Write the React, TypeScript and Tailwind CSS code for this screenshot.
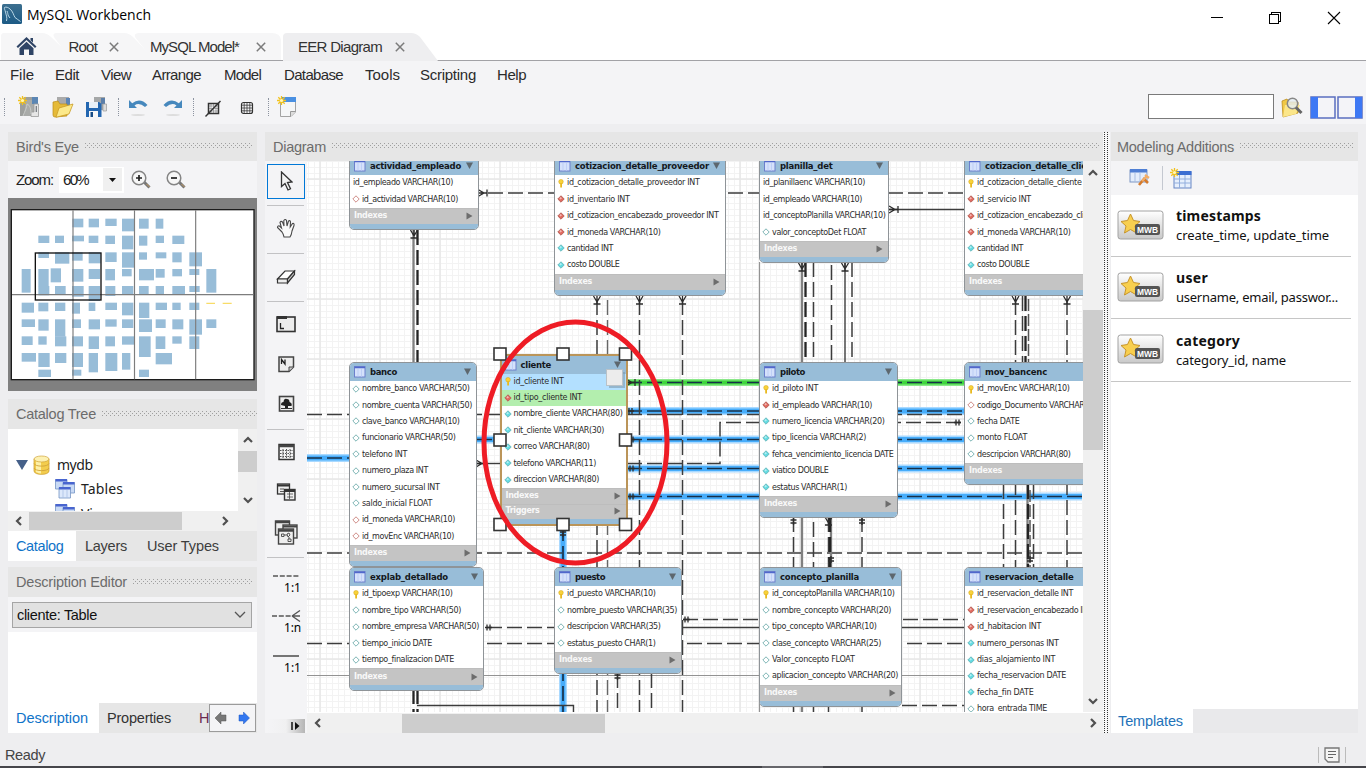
import React, { useLayoutEffect, useRef } from "react";

type FitProps = { w: number; className?: string; children: string };

/* A single line of text tracked so that it fills the given width. */
function Fit({ w, className = "", children }: FitProps) {
  const ref = useRef<HTMLSpanElement>(null);
  useLayoutEffect(() => {
    const el = ref.current;
    if (!el) return;
    el.style.letterSpacing = "0px";
    const natural = el.getBoundingClientRect().width;
    el.style.letterSpacing = `${(w - natural) / children.length}px`;
  }, [w, children]);
  return (
    <span ref={ref} className={`inline-block shrink-0 whitespace-pre ${className}`}>
      {children}
    </span>
  );
}

function Grip({ className = "" }: { className?: string }) {
  return (
    <svg className={`h-[7px] ${className}`} aria-hidden="true">
      <defs>
        <pattern id="grip" width="4" height="4" patternUnits="userSpaceOnUse">
          <rect x="0" y="0" width="1" height="1" fill="#9f9f9f" />
          <rect x="2" y="2" width="1" height="1" fill="#9f9f9f" />
        </pattern>
      </defs>
      <rect width="100%" height="6" fill="url(#grip)" shapeRendering="crispEdges" />
    </svg>
  );
}

function PanelHeader({ title, w, start = 8, end = 5, height = "h-[29px]" }: { title: string; w: number; start?: number; end?: number; height?: string }) {
  return (
    <div className={`flex shrink-0 items-center bg-[#e6e6e6] text-[14.500px] text-[#6c6c6c] ${height}`} style={{ paddingLeft: start, paddingRight: end }}>
      <Fit w={w}>{title}</Fit>
      <Grip className="ml-[6px] min-w-0 flex-1" />
    </div>
  );
}

/* ---------- Title bar, tabs, menu, toolbar ---------- */

function TitleBar() {
  return (
    <div className="flex h-[33px] shrink-0 items-start bg-white">
      <svg className="ml-[2px] mt-[4px]" width="20" height="20" viewBox="0 0 20 20">
        <defs>
          <linearGradient id="logo" x1="0" y1="0" x2="0" y2="1">
            <stop offset="0" stopColor="#3c6f8f" />
            <stop offset="1" stopColor="#1d5b86" />
          </linearGradient>
        </defs>
        <rect width="20" height="20" rx="1.5" fill="url(#logo)" />
        <path d="M4.500 17C5.500 13 4 11 3.500 8C3 6 2 4.500 2.500 3.500C4 2.500 6.500 3.500 8 5C11 7.500 11.500 11 13 13.500C14.500 15 17 16 18.500 17.500M5 7C6 9 5.500 10 6.500 12L8 14" fill="none" stroke="#b9d6e6" strokeWidth="1" />
      </svg>
      <Fit w={124} className="ml-[5px] mt-[5px] text-[14px] leading-[20px] text-black font-['Open_Sans',sans-serif]">MySQL Workbench</Fit>
      <svg className="ml-[1059px] mt-[10px]" width="132" height="16" viewBox="0 0 132 16" fill="none" stroke="#000" shapeRendering="crispEdges">
        <path d="M1 7.500H13" />
        <path d="M59.500 4.500H68.500V13.500H59.500zM61.500 4V2.500H70.500V11.500H69" />
        <path d="M118 2L130 14M130 2L118 14" shapeRendering="auto" strokeWidth="1.100" />
      </svg>
    </div>
  );
}

function TabX() {
  return (
    <svg width="10" height="10" viewBox="0 0 10 10">
      <path d="M.8 .8L9.200 9.200M9.200 .8L.8 9.200" stroke="#7b7b7b" strokeWidth="1.500" />
    </svg>
  );
}

function Tabs() {
  return (
    <div className="relative flex h-[28px] shrink-0 items-center bg-white text-[15px] text-[#333]">
      <svg className="absolute inset-0" width="1366" height="28">
        <path d="M1 27V3Q1 0 4 0H42Q47 0 51 4L75 27z" fill="#f6f6f7" />
        <path d="M71 27L54 4Q52 0 57 0H124Q129 0 133 4L155 27z" fill="#f6f6f7" />
        <path d="M153 27L135 4Q134 0 139 0H272Q280 0 281 7V27z" fill="#f6f6f7" />
        <path d="M0 27.500H283M437 27.500H1366" stroke="#a2a2a6" />
        <path d="M283 28V4Q283 0 287 0H411Q416 0 420 4L438 28z" fill="#eeeef0" />
      </svg>
      <div className="relative flex h-full items-center">
        <svg className="ml-[16px] mb-[3px]" width="21" height="20" viewBox="0 0 21 20" fill="#2f4465">
          <path d="M10.500 1L20.500 10.500L19 12L10.500 4L2 12L.5 10.500z" />
          <path d="M10.500 5.800L17.500 12.300V19H13V13.500H8V19H3.500V12.300z" />
          <path d="M14.500 2H17V6.500L14.500 4.200z" />
        </svg>
        <Fit w={28.500} className="ml-[31.500px]">Root</Fit>
        <span className="ml-[12px]"><TabX /></span>
        <Fit w={89} className="ml-[31px]">MySQL Model*</Fit>
        <span className="ml-[17px]"><TabX /></span>
        <Fit w={84} className="ml-[32px]">EER Diagram</Fit>
        <span className="ml-[13px]"><TabX /></span>
      </div>
    </div>
  );
}

const menu: [string, number, number][] = [
  ["File", 10, 24], ["Edit", 21, 24], ["View", 22, 30], ["Arrange", 21, 49], ["Model", 23, 37],
  ["Database", 23, 59], ["Tools", 22, 35], ["Scripting", 20, 56], ["Help", 21, 29],
];

function MenuBar() {
  return (
    <div className="flex h-[29px] shrink-0 items-center bg-[#f4f4f6] pb-[2px] text-[15px] text-[#2b2b2b]">
      {menu.map(([label, gap, w]) => (
        <span key={label} className="flex" style={{ marginLeft: gap }}><Fit w={w}>{label}</Fit></span>
      ))}
    </div>
  );
}

const Sep = ({ className = "" }: { className?: string }) => (
  <div className={`h-[18px] w-[2px] shrink-0 border-l border-dotted border-[#8c93a0] ${className}`} />
);

const Spark = () => (
  <g stroke="#f2c21c" strokeWidth="1.300">
    <path d="M4.500 0V9M0 4.500H9M1.300 1.300L7.700 7.700M7.700 1.300L1.300 7.700" />
    <circle cx="4.500" cy="4.500" r="1.600" fill="#fff6b8" stroke="none" />
  </g>
);

function Toolbar() {
  return (
    <div className="flex h-[34px] shrink-0 items-center bg-[#f4f4f6]">
      <Sep className="ml-[4px]" />
      <svg className="ml-[12px]" width="22" height="22" viewBox="0 0 22 22">
        <path d="M6 1H16V20H2V7z" fill="#9d9f9d" />
        <path d="M8 4H15L19 9V20H6z" fill="#a9aba9" />
        <path d="M14 1H20V8H14z" fill="#5b86b4" />
        <path d="M16 8H20.500V20.500H13V16H16z" fill="#e6e6e6" stroke="#9b9b9b" strokeWidth=".8" />
        <path d="M5 20C7 15 9 11 9 8C12 9 13 13 13 18" stroke="#c9cbc9" fill="none" />
        <path d="M18.300 10V16" stroke="#70757c" strokeWidth="1.200" />
        <Spark />
      </svg>
      <svg className="ml-[12px]" width="22" height="22" viewBox="0 0 22 22">
        <path d="M5 1H17V14H5z" fill="#aaa" /><path d="M14 2H18V10H14z" fill="#5c85b7" />
        <path d="M1 6L6 5L8 8H15V20L3 21Q1 21 1 19z" fill="#e5ba39" stroke="#bb8c19" strokeWidth=".7" />
        <path d="M7 12L21 8L17 18L4 21.300z" fill="#fce98a" stroke="#c99c25" strokeWidth=".8" />
      </svg>
      <svg className="ml-[11px]" width="23" height="22" viewBox="0 0 23 22">
        <path d="M9 1H20V14H9z" fill="#a5a7a8" /><path d="M16 2H20V8H16z" fill="#5c7fa9" /><path d="M18 8H21.500V15H18z" fill="#ddd" stroke="#999" strokeWidth=".7" />
        <path d="M1 6H14L16.500 8V21H1z" fill="#2366b0" /><path d="M4 6H13V12H4z" fill="#e8f0f7" />
        <path d="M4 15H13V21H4z" fill="#f8f8f8" /><path d="M5.500 16H8V21H5.500z" fill="#174c86" />
      </svg>
      <Sep className="ml-[10px]" />
      <svg className="ml-[9px]" width="19" height="20" viewBox="0 0 19 20">
        <path d="M0 3V11H8L5.500 8.500Q10 5 16 10L18.500 8Q11 0 3.200 6.300z" fill="#4688bd" />
        <ellipse cx="9" cy="18" rx="7" ry=".9" fill="#ddd" />
      </svg>
      <svg className="ml-[15px]" width="19" height="20" viewBox="0 0 19 20">
        <path d="M19 3V11H11L13.500 8.500Q9 5 3 10L.5 8Q8 0 15.800 6.300z" fill="#4688bd" />
        <ellipse cx="10" cy="18" rx="7" ry=".9" fill="#ddd" />
      </svg>
      <Sep className="ml-[11px]" />
      <svg className="ml-[10px] mt-[2px]" width="17" height="17" viewBox="0 0 17 17" fill="none" stroke="#333">
        <path d="M3.500 3.500H13.500V13.500H3.500z" strokeWidth="1.500" />
        <path d="M6 4V13M8.500 4V13M11 4V13M4 6H13M4 8.500H13M4 11H13" strokeWidth=".35" />
        <path d="M.5 16.500L15.500 1" strokeWidth="1.400" />
      </svg>
      <svg className="ml-[18px] mt-[2px]" width="14" height="14" viewBox="0 0 14 14" fill="none" stroke="#333">
        <rect x="1.500" y="1.500" width="11" height="11" rx="2" strokeWidth="1.200" />
        <path d="M4.200 1V13M7 1V13M9.800 1V13M1 4.200H13M1 7H13M1 9.800H13" strokeWidth=".75" />
      </svg>
      <Sep className="ml-[14px]" />
      <svg className="ml-[7px]" width="20" height="22" viewBox="0 0 20 22">
        <path d="M3.500 3V20.500H14L18.500 16V3z" fill="#f5f6f7" stroke="#a3a3a3" />
        <path d="M5 1H19V6H5z" fill="#4a90e2" /><path d="M13.500 20.500V15.500H18.500" fill="#ddd" stroke="#999" />
        <Spark />
      </svg>
      <div className="ml-auto mb-[2px] h-[25px] w-[126px] border border-[#7a7a7a] bg-white" />
      <svg className="ml-[7px]" width="22" height="21" viewBox="0 0 22 21">
        <path d="M1 4L6 2L8 5H17V16L2 20z" fill="#f0c846" stroke="#bd8e1f" strokeWidth=".8" />
        <path d="M4 8H19L15 17L2 20z" fill="#fbe68a" />
        <circle cx="11.500" cy="6.500" r="5.200" fill="#e5edf2cc" stroke="#888" strokeWidth="1.500" />
        <path d="M15 10.500L20.500 16" stroke="#656565" strokeWidth="3" />
      </svg>
      <svg className="ml-[7px] mr-[3px]" width="53" height="23" viewBox="0 0 53 23">
        <rect x="1" y="1" width="24" height="21" fill="#f4f4f8" stroke="#5a6ec0" strokeWidth="1.500" />
        <rect x="1" y="1" width="7" height="21" fill="#3e78f4" />
        <rect x="28" y="1" width="24" height="21" fill="#f4f4f8" stroke="#5a6ec0" strokeWidth="1.500" />
        <rect x="45" y="1" width="7" height="21" fill="#3e78f4" />
      </svg>
    </div>
  );
}

/* ---------- Left column ---------- */

/* x, y, width, height of every table on the overview map (thirds of a pixel) */
const mapBlocks: number[][] = [
  [217, 266, 33, 26], [266, 266, 31, 26], [316, 266, 34, 22], [366, 266, 38, 38], [417, 266, 29, 30], [467, 266, 23, 30],
  [115, 317, 33, 22], [165, 317, 27, 22], [216, 317, 36, 17], [266, 317, 29, 22], [316, 317, 29, 25], [366, 317, 34, 41], [417, 317, 25, 30], [467, 317, 25, 22], [517, 317, 36, 25],
  [115, 367, 32, 17], [165, 367, 43, 34], [216, 367, 32, 25], [266, 367, 36, 33], [316, 367, 34, 29], [366, 367, 36, 46], [417, 367, 24, 22], [467, 367, 32, 18], [517, 367, 28, 30], [568, 367, 38, 42],
  [65, 417, 27, 71], [115, 417, 31, 52], [152, 415, 31, 42], [216, 417, 34, 38], [266, 417, 34, 30], [316, 417, 29, 34], [366, 417, 29, 22], [417, 417, 45, 34], [467, 417, 27, 26], [517, 417, 29, 22], [568, 417, 30, 18], [619, 417, 30, 71],
  [115, 468, 33, 28], [165, 468, 32, 26], [216, 468, 35, 32], [266, 468, 34, 45], [316, 468, 30, 30], [366, 468, 34, 26], [417, 468, 29, 26], [467, 468, 25, 26], [517, 468, 38, 26], [568, 468, 31, 18],
  [65, 518, 37, 30], [115, 518, 30, 26], [165, 518, 31, 25], [216, 518, 24, 33], [266, 518, 20, 25], [316, 518, 35, 22], [366, 518, 34, 38], [417, 518, 31, 46], [467, 518, 34, 22], [517, 518, 25, 22], [568, 518, 30, 22],
  [65, 568, 40, 23], [115, 568, 31, 34], [165, 568, 31, 52], [216, 568, 27, 26], [266, 568, 34, 30], [316, 568, 34, 22], [366, 568, 34, 26], [417, 568, 39, 38], [467, 568, 30, 26], [517, 568, 33, 30], [568, 568, 38, 46], [619, 568, 30, 26],
  [65, 619, 33, 26], [115, 619, 25, 25], [165, 619, 34, 30], [216, 619, 33, 30], [266, 619, 31, 38], [316, 619, 29, 30], [366, 619, 36, 25], [417, 619, 35, 62], [467, 619, 29, 38], [517, 619, 28, 22], [568, 619, 30, 38],
  [65, 669, 43, 26], [115, 669, 34, 42], [165, 669, 34, 30], [216, 669, 33, 42], [266, 669, 28, 58], [316, 669, 36, 54], [366, 669, 25, 50], [467, 669, 49, 34],
  [115, 719, 38, 22], [216, 719, 28, 18], [417, 719, 30, 22],
];

function BirdsEye() {
  return (
    <div className="flex h-[259px] shrink-0 flex-col">
      <PanelHeader title="Bird's Eye" w={63} />
      <div className="flex h-[37px] items-center bg-[#f4f4f6] pl-[8px] text-[15px] text-[#222]">
        <Fit w={37}>Zoom:</Fit>
        <div className="ml-[6px] flex h-[26px] w-[65px] items-center bg-white pl-[4px]">
          <Fit w={25}>60%</Fit>
          <div className="ml-auto mr-[2px] flex h-[23px] w-[19px] items-center justify-center bg-[#f0f0f0]">
            <svg width="7" height="4"><path d="M0 0H7L3.500 4z" fill="#111" /></svg>
          </div>
        </div>
        {["+", "-"].map((s, i) => (
          <svg key={s} className={i ? "ml-[15px]" : "ml-[7px]"} width="20" height="19" viewBox="0 0 20 19" fill="none">
            <path d="M13 12L18.500 17.500" stroke="#777" strokeWidth="3" />
            <path d="M15.500 14L18.500 17" stroke="#c79c62" strokeWidth="1" />
            <circle cx="8" cy="8" r="6.800" fill="#f7f7f7" stroke="#858585" strokeWidth="1.500" />
            <path d={i ? "M5 8H11" : "M5 8H11M8 5V11"} stroke="#222" strokeWidth="1.700" />
          </svg>
        ))}
      </div>
      <svg width="249" height="193" viewBox="24 204 747 579">
        <rect x="24" y="204" width="747" height="579" fill="#808080" />
        <rect x="34" y="239" width="728" height="510" fill="#fff" stroke="#1c1c1c" strokeWidth="4" />
        {mapBlocks.map(([x, y, w, h], i) => <rect key={i} x={x} y={y} width={w} height={h} fill="#98bdd8" />)}
        <path d="M219 241V748M403.500 241V748M587 241V748M36 494H760" stroke="#7d7d7d" strokeWidth="3.500" />
        <path d="M619 520H645M668 520H695" stroke="#f8dc68" strokeWidth="4" />
        <rect x="106" y="369" width="197" height="141" fill="none" stroke="#111" strokeWidth="4" />
      </svg>
    </div>
  );
}

const Chevron = ({ d }: { d: string }) => (
  <svg width="10" height="10" viewBox="0 0 10 10"><path d={d} fill="none" stroke="#505050" strokeWidth="2.200" /></svg>
);
const UP = "M1 7L5 3L9 7", DOWN = "M1 3L5 7L9 3", LEFT = "M7 1L3 5L7 9", RIGHT = "M3 1L7 5L3 9";

const TablesIcon = () => (
  <svg width="20" height="20" viewBox="0 0 20 20">
    <g stroke="#7594c4" strokeWidth=".8">
      <path d="M.5 .5H12V10H.5z" fill="#c9daf5" /><path d="M8 3.500H19.500V14H8z" fill="#c9daf5" /><path d="M4 8.500H15.500V19H4z" fill="#dce8fb" />
    </g>
    <path d="M.5 0H12V2.500H.5zM8 3H19.500V5.500H8zM4 8H15.500V10.500H4z" fill="#4965cf" />
    <path d="M8 11V19M12 11V19" stroke="#a9c0e6" strokeWidth=".8" />
  </svg>
);

function CatalogTree() {
  return (
    <div className="mt-[8px] flex h-[162px] shrink-0 flex-col">
      <PanelHeader title="Catalog Tree" w={80} end={0} height="h-[30px]" />
      <div className="flex h-[82px]">
        <div className="w-[230px] overflow-hidden bg-white pt-[24px] text-[14px] text-[#222] font-['Noto_Sans',sans-serif]">
          <div className="flex h-[24px] items-center">
            <svg className="ml-[8px]" width="12" height="10"><path d="M0 0H12L6 10z" fill="#456089" /></svg>
            <svg className="ml-[5px]" width="18" height="20" viewBox="0 0 18 20">
              <path d="M1 4V16C1 20.500 16 20.500 16 16V4z" fill="#f3cd4e" stroke="#c9992b" strokeWidth=".7" />
              <path d="M3 6V17Q6 18.500 8 18.500V7z" fill="#fdf0a8" />
              <ellipse cx="8.500" cy="4" rx="7.500" ry="3" fill="#fdf1b2" stroke="#d0a33b" strokeWidth=".7" />
              <path d="M1 8.500C2 12 15 12 16 8.500M1 13C2 16.500 15 16.500 16 13" fill="none" stroke="#d0a33b" strokeWidth=".9" />
            </svg>
            <Fit w={35.500} className="ml-[6px]">mydb</Fit>
          </div>
          <div className="flex h-[24px] items-center pl-[47px]"><TablesIcon /><Fit w={42} className="ml-[6px]">Tables</Fit></div>
          <div className="flex h-[26px] items-center pl-[47px]"><TablesIcon /><Fit w={37} className="ml-[6px]">Views</Fit></div>
        </div>
        <div className="flex w-[19px] flex-col items-center bg-[#f0f0f0]">
          <span className="flex h-[22px] items-center"><Chevron d={UP} /></span>
          <div className="h-[21px] w-full bg-[#cdcdcd]" />
          <span className="mt-auto flex h-[22px] items-center"><Chevron d={DOWN} /></span>
        </div>
      </div>
      <div className="flex h-[20px] items-center bg-[#f0f0f0]">
        <span className="flex w-[21px] justify-center"><Chevron d={LEFT} /></span>
        <div className="h-[18px] w-[153px] bg-[#cdcdcd]" />
        <span className="ml-[38px]"><Chevron d={RIGHT} /></span>
      </div>
      <div className="flex h-[30px] bg-[#e6e6e6] text-[14.500px] text-[#3d3d3d]">
        <div className="flex h-full w-[68px] items-center bg-white pl-[8px] text-[#0f73c8]"><Fit w={47.500}>Catalog</Fit></div>
        <div className="flex items-center pl-[9px]"><Fit w={42}>Layers</Fit><Fit w={72} className="ml-[20px]">User Types</Fit></div>
      </div>
    </div>
  );
}

function DescriptionEditor() {
  return (
    <div className="mt-[6px] flex h-[166px] shrink-0 flex-col">
      <PanelHeader title="Description Editor" w={111} height="h-[30px]" />
      <div className="flex h-[35px] items-center justify-center bg-[#f4f4f6]">
        <div className="mr-[1px] flex h-[26px] w-[240px] items-center border border-[#a5a5a5] bg-[#e1e1e1] pl-[4px] pr-[5px] text-[14.500px] text-[#111]">
          <Fit w={80}>cliente: Table</Fit>
          <svg className="ml-auto" width="12" height="7"><path d="M1 1L6 6L11 1" fill="none" stroke="#555" strokeWidth="1.300" /></svg>
        </div>
      </div>
      <div className="h-[71px] bg-white" />
      <div className="flex h-[30px] bg-[#e6e6e6] text-[14.500px] text-[#333]">
        <div className="flex h-full w-[91px] shrink-0 items-center bg-white pl-[8px] text-[#0f73c8]"><Fit w={72}>Description</Fit></div>
        <div className="flex w-[110px] shrink-0 items-center overflow-hidden pl-[8px]"><Fit w={64}>Properties</Fit><Fit w={10} className="ml-[28px] text-[#6b2a50]">H</Fit></div>
        <div className="mt-[1px] flex h-[28px] w-[47px] items-center justify-around border border-[#9b9b9b] bg-[#f4f4f6]">
          <svg width="12" height="14"><path d="M0 7L6 1V4H11V10H6V13z" fill="#777" stroke="#555" strokeWidth=".5" /></svg>
          <svg width="12" height="14"><path d="M11.500 7L5.500 1V4H1V10H5.500V13z" fill="#3277f0" stroke="#1b55c0" strokeWidth=".5" /></svg>
        </div>
      </div>
    </div>
  );
}

/* ---------- Tool strip ---------- */

const toolIcons: Record<string, React.ReactNode> = {
  hand: <path d="M6 14L1.500 9.500Q1.500 7.500 3.500 8L5.500 10L4 4.500Q4.800 2.500 6.500 4L8 8L7.800 2.500Q9.300 .5 10.500 2.500L11 8L12.500 3Q14.200 2 14.500 4L14.200 9L16.500 5.500Q18.500 5 18 7.500L16 13Q15.500 17 14 19H8Q7.500 16 6 14z" fill="#fafafa" stroke="#484848" strokeWidth="1.100" />,
  eraser: <g transform="translate(0 1)"><path d="M1.500 12L9 4H18.500L11.500 12z" fill="#fff" stroke="#333" strokeWidth="1.200" /><path d="M1.500 12H11.500V16H1.500z" fill="#eee" stroke="#333" strokeWidth="1.200" /><path d="M11.500 12L18.500 4V7.500L11.500 16z" fill="#ccc" stroke="#333" strokeWidth="1.200" /></g>,
  layer: <g><rect x="1" y="3" width="18" height="14.500" fill="#ececec" stroke="#333" strokeWidth="1.600" /><path d="M1 2H11V5H1z" fill="#333" /><path d="M4.500 9V14.500H8" stroke="#222" strokeWidth="1.300" fill="none" /></g>,
  note: <g><path d="M3 3H17.500V13L13 17.500H3z" fill="#eee" stroke="#444" strokeWidth="1.500" /><path d="M13 17V13H17.500" fill="#ccc" stroke="#444" /><path d="M5.500 10V5.500L9 10V5.500" fill="none" stroke="#222" strokeWidth="1.300" /></g>,
  image: <g><rect x="3.500" y="2.500" width="14" height="14.500" fill="#eee" stroke="#444" strokeWidth="1.600" /><path d="M5 11Q5 8 7.500 8Q8 4 11 5Q13.500 5 13.500 8Q16.500 9 15.500 12L12 12V15H9V12z" fill="#222" /><path d="M5 14.500H16" stroke="#333" /></g>,
  table: <g><rect x="3" y="2.500" width="15" height="15" fill="#f5f5f5" stroke="#333" strokeWidth="1.500" /><path d="M3 4H18" stroke="#444" strokeWidth="2.500" /><path d="M7 7V17M10.500 7V17M14 7V17M4 8.500H17M4 11.500H17M4 14.500H17" stroke="#555" strokeDasharray="1.500 1" /></g>,
  view: <g stroke="#333" fill="#eee"><rect x="1.500" y="2" width="12" height="10" strokeWidth="1.300" /><path d="M1.500 3.500H13.500" strokeWidth="2" /><path d="M4 7H8M4 9.500H8" strokeWidth=".8" /><rect x="8.500" y="7.500" width="10.500" height="10.500" strokeWidth="1.400" /><path d="M8.500 9H19" strokeWidth="2" /><path d="M11 12H17M11 15H17M13.500 10V17" strokeWidth=".7" /></g>,
  routine: <g stroke="#444" fill="#eee" strokeWidth="1.400"><rect x="-.5" y="-1" width="14" height="14" /><path d="M-.5 0H13.500" strokeWidth="2.500" /><rect x="7" y="3" width="14" height="13" /><path d="M7 4.500H21" strokeWidth="2" /><rect x="2.500" y="7" width="15" height="15" /><path d="M2.500 8.500H17.500" strokeWidth="2.500" /><path d="M5.500 12H8V14.500H5.500zM12 17H15V19.500H12zM11 12L13 11L14 13L12 15zM8 13H11M13 15V17" strokeWidth=".9" /></g>,
};

const ToolItem = ({ name }: { name: string }) => (
  <div className="flex h-[40px] shrink-0 items-center justify-center pr-[2px]"><svg className="overflow-visible" width="20" height="20" viewBox="0 0 20 20">{toolIcons[name]}</svg></div>
);
const ToolSep = () => <div className="flex h-[8px] shrink-0 items-center pt-[3px]"><div className="h-px w-[37px] bg-[#c2c2c4]" /></div>;

function Relation({ label, kind }: { label: string; kind: number }) {
  return (
    <div className="flex h-[40px] shrink-0 flex-col items-end pr-[6px] pt-[10px]">
      <svg width="29" height="12" viewBox="0 0 29 12" fill="none" stroke="#555" strokeWidth="1.600">
        <path d={kind === 1 ? "M0 6H20" : "M1 6H27"} strokeDasharray={kind === 2 ? undefined : "5 1.800"} />
        {kind === 1 && <path d="M20 6L28 .5M20 6L28 11.500M20 6H28" strokeWidth="1.300" />}
      </svg>
      <Fit w={17} className="text-[12px] leading-[11px] text-black font-['Noto_Sans',sans-serif]">{label}</Fit>
    </div>
  );
}

function ToolStrip() {
  return (
    <div className="flex h-full w-[42px] shrink-0 flex-col bg-[#f4f4f6] pl-[2px] pt-[3px]">
      <div className="flex h-[35px] w-[38px] shrink-0 items-center justify-center border border-[#0078d7]">
        <svg width="13" height="21" viewBox="0 0 13 21"><path d="M1.500 1V15.500L5 12.500L8 19L10.500 17.800L7.500 11.500L12 11z" fill="#f4f4f4" stroke="#333" strokeWidth="1.300" /></svg>
      </div>
      <div className="h-px shrink-0" />
      <ToolSep />
      <ToolItem name="hand" /><ToolSep />
      <ToolItem name="eraser" /><ToolSep />
      <ToolItem name="layer" /><ToolItem name="note" /><ToolItem name="image" /><ToolSep />
      <ToolItem name="table" /><ToolItem name="view" /><ToolItem name="routine" /><ToolSep />
      <Relation label="1:1" kind={0} /><Relation label="1:n" kind={1} /><Relation label="1:1" kind={2} />
      <div className="mt-auto flex h-[14px] w-[38px] items-center justify-end bg-gradient-to-r from-[#f4f4f6] via-[#f0f0f1] to-[#b5b5b5] pr-[5px]">
        <svg width="9" height="8"><path d="M1 0V8" stroke="#111" strokeWidth="1.500" /><path d="M4 0L8.500 4L4 8z" fill="#111" /></svg>
      </div>
    </div>
  );
}

/* ---------- Diagram ---------- */

type Row = [icon: "k" | "r" | "R" | "c" | "C" | "", text: string, width: number];
type Entity = { name: string; nw: number; x: number; y: number; w: number; rows: Row[]; selected?: boolean };

const entities: Entity[] = [
  { name: "actividad_empleado", nw: 91, x: 349, y: 156.2, w: 130, rows: [["", "id_empleado VARCHAR(10)", 100], ["R", "id_actividad VARCHAR(10)", 96]] },
  { name: "cotizacion_detalle_proveedor", nw: 134, x: 554, y: 156.2, w: 172, rows: [["k", "id_cotizacion_detalle_proveedor INT", 132.5], ["r", "id_inventario INT", 62.5], ["r", "id_cotizacion_encabezado_proveedor INT", 151.5], ["r", "id_moneda VARCHAR(10)", 93.5], ["c", "cantidad INT", 46], ["c", "costo DOUBLE", 52.5]] },
  { name: "planilla_det", nw: 52.5, x: 759, y: 156.2, w: 130, rows: [["", "id_planillaenc VARCHAR(10)", 102], ["", "id_empleado VARCHAR(10)", 99], ["", "id_conceptoPlanilla VARCHAR(10)", 122.5], ["C", "valor_conceptoDet FLOAT", 94]] },
  { name: "cotizacion_detalle_cliente", nw: 117, x: 964, y: 156.2, w: 160, rows: [["k", "id_cotizacion_detalle_cliente INT", 119], ["r", "id_servicio INT", 54], ["r", "id_cotizacion_encabezado_cliente INT", 138], ["r", "id_moneda VARCHAR(10)", 93.5], ["c", "cantidad INT", 46], ["c", "costo DOUBLE", 52.5]] },
  { name: "banco", nw: 27, x: 349, y: 362, w: 128, rows: [["C", "nombre_banco VARCHAR(50)", 107.5], ["C", "nombre_cuenta VARCHAR(50)", 110], ["C", "clave_banco VARCHAR(10)", 97.5], ["C", "funcionario VARCHAR(50)", 93.5], ["C", "telefono INT", 45], ["C", "numero_plaza INT", 66], ["C", "numero_sucursal INT", 77.5], ["C", "saldo_inicial FLOAT", 70], ["R", "id_moneda VARCHAR(10)", 93], ["R", "id_movEnc VARCHAR(10)", 92]] },
  { name: "cliente", nw: 30.5, x: 499.5, y: 353.5, w: 128, selected: true, rows: [["k", "id_cliente INT", 50], ["r", "id_tipo_cliente INT", 68.5], ["c", "nombre_cliente VARCHAR(80)", 109], ["c", "nit_cliente VARCHAR(30)", 90.5], ["c", "correo VARCHAR(80)", 76], ["c", "telefono VARCHAR(11)", 82.5], ["c", "direccion VARCHAR(80)", 85.5]] },
  { name: "piloto", nw: 25, x: 759, y: 362, w: 139, rows: [["k", "id_piloto INT", 46], ["r", "id_empleado VARCHAR(10)", 100], ["c", "numero_licencia VARCHAR(20)", 112.5], ["c", "tipo_licencia VARCHAR(2)", 94], ["c", "fehca_vencimiento_licencia DATE", 121.5], ["c", "viatico DOUBLE", 56.5], ["c", "estatus VARCHAR(1)", 75]] },
  { name: "mov_bancenc", nw: 62, x: 964, y: 362, w: 160, rows: [["k", "id_movEnc VARCHAR(10)", 92.5], ["R", "codigo_Documento VARCHAR(10)", 122], ["C", "fecha DATE", 42.5], ["C", "monto FLOAT", 50], ["C", "descripcion VARCHAR(80)", 93.5]] },
  { name: "explab_detallado", nw: 78, x: 349, y: 567.3, w: 134.5, rows: [["k", "id_tipoexp VARCHAR(10)", 90.5], ["C", "nombre_tipo VARCHAR(50)", 99], ["C", "nombre_empresa VARCHAR(50)", 117], ["C", "tiempo_inicio DATE", 70], ["C", "tiempo_finalizacion DATE", 92]] },
  { name: "puesto", nw: 30, x: 554, y: 567.3, w: 128, rows: [["k", "id_puesto VARCHAR(10)", 88.5], ["C", "nombre_puesto VARCHAR(35)", 110], ["C", "descripcion VARCHAR(35)", 93.5], ["C", "estatus_puesto CHAR(1)", 88.5]] },
  { name: "concepto_planilla", nw: 79, x: 759, y: 567.3, w: 143, rows: [["k", "id_conceptoPlanilla VARCHAR(10)", 122.5], ["C", "nombre_concepto VARCHAR(20)", 119], ["C", "tipo_concepto VARCHAR(10)", 104.5], ["C", "clase_concepto VARCHAR(25)", 109], ["C", "Valor_concepto FLOAT", 82.5], ["C", "aplicacion_concepto VARCHAR(20)", 126]] },
  { name: "reservacion_detalle", nw: 88.5, x: 964, y: 567.3, w: 160, rows: [["k", "id_reservacion_detalle INT", 96], ["r", "id_reservacion_encabezado INT", 115.5], ["r", "id_habitacion INT", 64], ["c", "numero_personas INT", 81.5], ["c", "dias_alojamiento INT", 78], ["c", "fecha_reservacion DATE", 89], ["c", "fecha_fin DATE", 56.5], ["C", "hora_entrada TIME", 70]] },
];

function RowIcon({ kind }: { kind: string }) {
  if (kind === "k")
    return <svg width="8" height="9" viewBox="0 0 8 9"><circle cx="4" cy="2.700" r="2.300" fill="#f8d23a" stroke="#d7a61a" strokeWidth=".5" /><path d="M3.200 4H5V8.500H3.200z" fill="#e9b920" /></svg>;
  const red = kind === "r" || kind === "R";
  const solid = kind === "r" || kind === "c";
  const stroke = red ? (solid ? "#b8645c" : "#cf8d88") : solid ? "#6fbcc0" : "#7db5b5";
  const fill = solid ? (red ? "#e2695f" : "#62dbe2") : "#fff";
  return (
    <svg className="mb-[1px]" width="8" height="8" viewBox="0 0 8 8">
      <path d="M4 .8L7.200 4L4 7.200L.8 4z" fill={fill} stroke={stroke} strokeWidth="1" strokeLinejoin="round" />
      {solid && <path d="M3.600 2L5 3.300L3.600 4.600L2.300 3.300z" fill="#ffffff88" />}
    </svg>
  );
}

function Bar({ label, w, short }: { label: string; w: number; short?: boolean }) {
  return (
    <div className={`flex shrink-0 items-center border-t border-[#bdbdbd] bg-[#c4c4c4] pb-[1px] pl-[4px] pr-[5px] ${short ? "h-[15.500px]" : "h-[16.500px]"}`}>
      <Fit w={w} className="text-[8px] font-bold leading-[10px] text-[#f8f8f8]">{label}</Fit>
      <svg className="ml-auto" width="7" height="8"><path d="M.5 .5L6.500 4L.5 7.500z" fill="#6d6d6d" /></svg>
    </div>
  );
}

function EntityBox({ e }: { e: Entity }) {
  return (
    <div
      className={`absolute flex flex-col overflow-hidden bg-white ${e.selected ? "border-2 border-[#bb9559]" : "rounded-[5px] border border-[#8f9498]"}`}
      style={{ left: e.x - 307, top: e.y - 161, width: e.w }}
    >
      <div className={`flex shrink-0 items-center bg-[#98bdd8] pr-[5px] ${e.selected ? "h-[18px] pl-[3px]" : "h-[18px] pl-[4px]"}`}>
        <svg width="12" height="12" viewBox="0 0 12 12">
          <rect x=".5" y=".5" width="10.500" height="10.500" fill="#d5e1fb" stroke="#6c80cc" />
          <path d="M.5 1.500H11" stroke="#5068cc" strokeWidth="1.600" /><path d="M4 3V11M7.500 3V11" stroke="#b6c7f3" strokeWidth=".7" />
        </svg>
        <Fit w={e.nw} className="ml-[4px] text-[8.500px] font-bold leading-[12px] text-[#14181c]">{e.name}</Fit>
        <svg className="ml-auto" width="7" height="8"><path d="M0 .5H7L3.500 7z" fill="#5d676e" /></svg>
      </div>
      {e.rows.map(([icon, text, w], i) => (
        <div
          key={i}
          className={`flex h-[16.400px] shrink-0 items-center ${e.selected && i === 0 ? "bg-[#b3e0ff]" : e.selected && i === 1 ? "bg-[#b3eeae]" : ""}`}
        >
          {icon ? <span className="ml-[2px] mr-[2px] w-[8px] shrink-0"><RowIcon kind={icon} /></span> : <span className="w-[3px]" />}
          <Fit w={w} className="text-[8px] leading-[12px] text-[#2c2c2c]">{text}</Fit>
        </div>
      ))}
      <Bar label="Indexes" w={33} short={e.selected} />
      {e.selected && <Bar label="Triggers" w={34} short />}
      <div className="h-[5px] shrink-0 bg-[#98bdd8]" />
    </div>
  );
}

const dashed: string[] = [
  "M488 193H964", "M307 414.500H964", "M307 553H1082", "M487 627.500H554", "M307 643.500H964", "M683 619.500H964", "M902 705.500H964",
  "M627 463.500H720V422.500H964",
  "M597 300V712", "M639.500 300V712", "M682.500 300V712", "M617.500 673V712", "M651.500 673V712",
  "M813.500 262V712", "M831.500 265V362", "M852 262V362", "M793.500 517V712", "M828.500 517V712", "M862 517V712",
  "M1015.500 300V567", "M1022.500 296V362", "M1067 300V567", "M1003.500 484V567", "M1033.500 484V567",
];
const solid: string[] = [
  "M889 209.500H964", "M682 627.500H964", "M477 463.500H500", "M845 262V362", "M417 705.500H573.500V712",
];
const blue: string[] = ["M627 411H964", "M477 439.500H500", "M627 439.500H964", "M307 458H349", "M627 468.500H964", "M627 496.500H1082", "M563 526V712"];

const crowDown = (x: number, y: number) => `M${x - 3.5} ${y}L${x} ${y + 6}L${x + 3.5} ${y}M${x} ${y}V${y + 8}M${x - 3.5} ${y + 8}H${x + 3.5}`;
const crowRight = (x: number, y: number) => `M${x} ${y - 3.5}L${x + 6} ${y}L${x} ${y + 3.5}M${x} ${y}H${x + 9}M${x + 9} ${y - 3.5}V${y + 3.5}`;
const barsH = (x: number, y: number) => `M${x} ${y - 3}V${y + 3}M${x + 3} ${y - 3}V${y + 3}M${x - 2} ${y}H${x + 5}`;
const barsV = (x: number, y: number) => `M${x - 3} ${y}H${x + 3}M${x - 3} ${y + 3}H${x + 3}M${x} ${y - 2}V${y + 5}`;

function Links() {
  return (
    <svg className="absolute inset-0" width="776" height="551" viewBox="307 161 776 551" fill="none">
      <defs>
        <pattern id="minor" x="320" y="179" width="6" height="6" patternUnits="userSpaceOnUse">
          <path d="M.5 0V6M0 .5H6" stroke="#f3f3f3" />
        </pattern>
        <pattern id="major" x="319" y="178" width="60" height="60" patternUnits="userSpaceOnUse">
          <path d="M1 0V60M0 1H60" stroke="#e8e8e8" strokeWidth="1.500" />
        </pattern>
      </defs>
      <rect x="307" y="161" width="776" height="551" fill="url(#minor)" />
      <rect x="307" y="161" width="776" height="551" fill="url(#major)" />
      <path d="M307 675.500H964M759.500 262V712" stroke="#939393" strokeWidth="1.200" />
      <path d="M607.500 300V712" stroke="#666" strokeWidth="1.400" strokeDasharray="15 5" />
      <path d="M627 382.500H964" stroke="#8be88a" strokeWidth="7" /><path d="M627 382.500H964" stroke="#3fd63d" strokeWidth="4" />
      {blue.map((d) => <path key={d} d={d} stroke="#a9d9ff" strokeWidth="8" />)}
      {blue.map((d) => <path key={d} d={d} stroke="#47adfb" strokeWidth="5" />)}
      {[...blue, "M627 382.500H964"].map((d) => <path key={d} d={d} stroke="#173049" strokeWidth="1.700" strokeDasharray="15 5" />)}
      {dashed.map((d) => <path key={d} d={d} stroke="#3c3c3c" strokeWidth="1.500" strokeDasharray="15 5" />)}
      {solid.map((d) => <path key={d} d={d} stroke="#3c3c3c" strokeWidth="1.400" />)}
      <path d="M413.500 230V362M802 262V362M802 517V567M802 705V712M1027.500 484V567M831 517V567" stroke="#808080" strokeWidth="2.300" />
      <path d="M417.500 230V362M413.500 689V712M417.500 689V712M805.500 262V362M830 517V567M1025.500 296V362M1028 484V567" stroke="#242424" strokeWidth="2.300" strokeDasharray="15 5" />
      <path d="M1028.500 299V362M1030 490V567" stroke="#555" strokeWidth="1.500" strokeDasharray="12 3" />
      <path
        d={[
          crowDown(414, 230), crowDown(597, 296), crowDown(639.5, 296), crowDown(682.5, 296), crowDown(802, 263), crowDown(845, 263),
          crowDown(1015.5, 296), crowDown(1067, 296), crowDown(828.5, 517), crowRight(478, 193), crowRight(889, 209.5), crowRight(476, 463.5),
          crowRight(626, 382.5), barsH(629, 411), barsH(630, 439.5), barsH(630, 468.5), barsH(630, 496.5), barsH(956, 422.5), barsH(487, 627.5),
          barsH(685, 619.5), barsV(617.5, 675), barsV(793.5, 520), barsV(862, 520), barsV(831, 558), barsV(1030, 558), barsH(496, 439.5), barsV(563, 532),
        ].join("")}
        stroke="#2c2c2c"
        strokeWidth="1.300"
      />
    </svg>
  );
}

function Canvas() {
  return (
    <div className="relative h-[551px] w-[776px] overflow-hidden bg-white font-['DejaVu_Sans',sans-serif]">
      <Links />
      {entities.map((e) => <EntityBox key={e.name} e={e} />)}
      <svg className="absolute inset-0" width="776" height="551" viewBox="307 161 776 551">
        <rect x="609" y="372" width="16" height="16" fill="#7893a5" opacity=".55" />
        <rect x="606.500" y="369.500" width="16" height="16" fill="#ececec" stroke="#b9c2c8" />
        {[500, 563, 625.5].flatMap((x) => [354, 440, 524.5].map((y) =>
          x === 563 && y === 440 ? null : <rect key={`${x}-${y}`} x={x - 6} y={y - 6} width="12" height="12" fill="#fff" stroke="#333" strokeWidth="1.600" />
        ))}
        <ellipse cx="575.500" cy="442.500" rx="91.500" ry="120.500" fill="none" stroke="#ee1c25" strokeWidth="5" />
      </svg>
    </div>
  );
}

function DiagramPanel() {
  return (
    <div className="flex w-[838px] flex-col">
      <PanelHeader title="Diagram" w={53} end={3} />
      <div className="flex h-[572px]">
        <ToolStrip />
        <div className="flex flex-col bg-white">
          <div className="flex h-[551px]">
            <Canvas />
            <div className="flex w-[20px] flex-col items-center bg-[#f0f0f0]">
              <span className="flex h-[24px] items-center"><Chevron d={UP} /></span>
              <div className="mt-[125px] h-[140px] w-full bg-[#cdcdcd]" />
              <span className="mt-auto flex h-[22px] items-center"><Chevron d={DOWN} /></span>
            </div>
          </div>
          <div className="mt-px flex h-[20px] items-center bg-[#f0f0f0]">
            <span className="ml-[6px]"><Chevron d={LEFT} /></span>
            <div className="ml-[79px] h-[19px] w-[203px] bg-[#cdcdcd]" />
            <span className="ml-auto mr-[5px]"><Chevron d={RIGHT} /></span>
          </div>
        </div>
      </div>
    </div>
  );
}

/* ---------- Right column ---------- */

const templates: [string, number, string, number][] = [
  ["timestamps", 85, "create_time, update_time", 153],
  ["user", 32, "username, email, passwor...", 162],
  ["category", 64, "category_id, name", 110],
];

function Additions() {
  return (
    <div className="flex w-[248px] flex-col pl-[1px]">
      <PanelHeader title="Modeling Additions" w={117} start={6} />
      <div className="flex h-[34px] items-center bg-[#f4f4f6] pl-[18px]">
        <svg width="22" height="22" viewBox="0 0 22 22">
          <rect x="1" y="3" width="17" height="12" fill="#e4eefc" stroke="#7d96c4" /><path d="M1 2H18V5.500H1z" fill="#4f7fd4" />
          <path d="M6 6V15M11 6V15" stroke="#a9bee0" /><path d="M10 18L15 12L19 16" fill="none" stroke="#d57a2c" strokeWidth="2.600" />
          <path d="M13 14L18 9M16 8L20 11" stroke="#f2ad66" strokeWidth="2.200" />
        </svg>
        <div className="ml-[11px] mr-[7px] h-[24px] w-px bg-[#c4c8d0]" />
        <svg width="23" height="21" viewBox="0 0 23 21">
          <rect x="4" y="4" width="17" height="16" fill="#e6effc" stroke="#6685c4" /><path d="M4 3H21.500V7H4z" fill="#3c6fd2" />
          <path d="M9.500 7V20M15 7V20M4 11H21M4 15H21" stroke="#92aedd" /><Spark />
        </svg>
      </div>
      <div className="h-[514px] bg-white pr-[7px]">
        {templates.map(([name, nw, sub, sw], i) => (
          <div key={name} className={`flex items-center border-b border-[#c6c6c6] pl-[6px] ${i === 2 ? "h-[63px]" : "h-[62px]"}`}>
            <svg className="mb-[2px]" width="48" height="30" viewBox="0 0 48 30">
              <defs><linearGradient id="plate" x1="0" y1="0" x2="0" y2="1"><stop offset="0" stopColor="#fff" /><stop offset="1" stopColor="#c9c9c9" /></linearGradient></defs>
              <rect x="1" y="1" width="45" height="28" rx="2.500" fill="url(#plate)" stroke="#a2a2a2" />
              <path d="M13.500 4L16.500 10.500L23 11.500L18 16L19.500 23L13.500 19.500L7.500 23L9 16L4 11.500L10.500 10.500z" fill="#f8cf4f" stroke="#c7952c" />
              <rect x="18" y="14" width="25" height="11" rx="2" fill="#555" />
              <text x="30.500" y="23" textAnchor="middle" fontSize="9" fontWeight="700" fill="#fff" textLength="21" lengthAdjust="spacingAndGlyphs">MWB</text>
            </svg>
            <div className="ml-[11px] flex flex-col items-start text-[#111] font-['Noto_Sans',sans-serif]">
              <Fit w={nw} className="text-[14px] font-bold leading-[19px]">{name}</Fit>
              <Fit w={sw} className="text-[13px] leading-[20px]">{sub}</Fit>
            </div>
          </div>
        ))}
      </div>
      <div className="flex h-[24px] bg-[#e9e9eb]">
        <div className="flex w-[82px] items-center bg-white pl-[7px] text-[14.500px] text-[#2372b9]"><Fit w={65}>Templates</Fit></div>
      </div>
    </div>
  );
}

export default function App() {
  return (
    <div className="flex h-[768px] w-[1366px] flex-col overflow-hidden bg-[#eeeef0] leading-[18px] font-['Liberation_Sans',Arial,sans-serif]">
      <TitleBar />
      <Tabs />
      <MenuBar />
      <Toolbar />
      <div className="flex h-[609px] shrink-0 pt-[8px]">
        <div className="ml-[8px] flex w-[249px] flex-col">
          <BirdsEye />
          <CatalogTree />
          <DescriptionEditor />
        </div>
        <div className="ml-[8px]"><DiagramPanel /></div>
        <div className="flex w-[7px] gap-[2px] bg-[#f7f7f7] pl-px">
          <div className="h-full w-px border-l border-dotted border-[#333]" />
          <div className="h-full w-px border-l border-dotted border-[#333]" />
        </div>
        <Additions />
      </div>
      <div className="flex h-[33px] shrink-0 items-center justify-between pl-[5px] pt-[11px] text-[14.500px] text-[#444]">
        <Fit w={40}>Ready</Fit>
        <div className="mr-[20px] flex items-center">
          <div className="mr-[5px] h-[16px] w-px bg-[#bbb]" />
          <svg width="16" height="16" viewBox="0 0 16 16">
            <path d="M1 1H15V15H4L1 12z" fill="#f4f4f4" stroke="#777" strokeWidth="1.300" /><path d="M4 4.500H12M4 7.500H12M4 10.500H9" stroke="#666" />
          </svg>
          <div className="ml-[5px] h-[16px] w-px bg-[#bbb]" />
        </div>
      </div>
      <div className="flex h-[2px] shrink-0 bg-[#45454a]"><div className="ml-[762px] h-full w-[61px] bg-[#66666b]" /></div>
    </div>
  );
}
